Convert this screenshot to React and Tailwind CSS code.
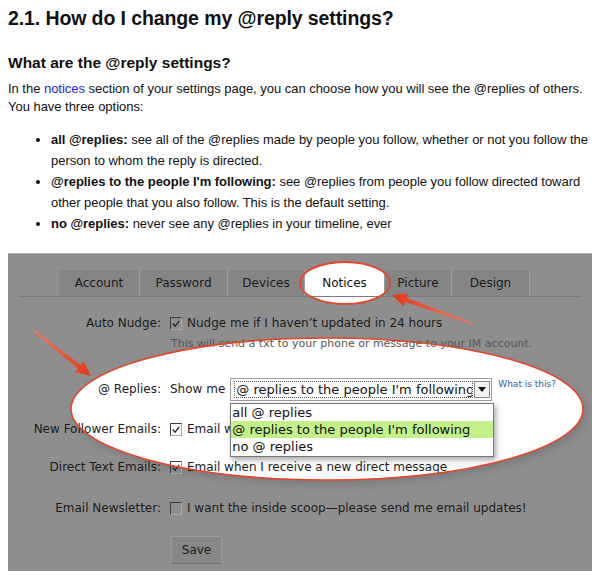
import React from "react";

const tabs = [
	{ name: "Account", w: 81 },
	{ name: "Password", w: 88 },
	{ name: "Devices", w: 77 },
	{ name: "Notices", w: 80, active: true },
	{ name: "Picture", w: 67 },
	{ name: "Design", w: 78 },
];

// tapered red arrow drawn from tail (x1,y1) to head (x2,y2)
function Arrow({ x1, y1, x2, y2, id }) {
	const dx = x2 - x1;
	const dy = y2 - y1;
	const len = Math.sqrt(dx * dx + dy * dy);
	const ux = dx / len;
	const uy = dy / len;
	const nx = -uy;
	const ny = ux;
	const headLen = 15;
	const headW = 7;
	const bx = x2 - ux * headLen;
	const by = y2 - uy * headLen;
	const pts = [
		[x1 + nx * 0.8, y1 + ny * 0.8],
		[bx + nx * 2.2, by + ny * 2.2],
		[bx + nx * headW, by + ny * headW],
		[x2, y2],
		[bx - nx * headW, by - ny * headW],
		[bx - nx * 2.2, by - ny * 2.2],
		[x1 - nx * 0.8, y1 - ny * 0.8],
	];
	return (
		<g>
			<defs>
				<linearGradient id={id} x1={x1} y1={y1} x2={x2} y2={y2} gradientUnits="userSpaceOnUse">
					<stop offset="0" stopColor="#f07a5e" />
					<stop offset="1" stopColor="#e2381c" />
				</linearGradient>
			</defs>
			<polygon points={pts.map((p) => p.join(",")).join(" ")} fill={`url(#${id})`} />
		</g>
	);
}

function Check({ checked }) {
	return (
		<span className="inline-flex w-[12px] h-[13px] shrink-0 items-end border-l border-t border-[#3a3a3a] border-r border-r-[#a8a8a8] border-b border-b-[#a8a8a8]">
			{checked && (
				<svg width="11" height="11" viewBox="0 0 11 11">
					<path d="M2 5.5 L4.5 8.5 L9 2.5" fill="none" stroke="#222" strokeWidth="1.3" />
				</svg>
			)}
		</span>
	);
}

function Row({ label, children, className }) {
	return (
		<div className={`flex items-center ${className || ""}`}>
			<div className="w-[154px] shrink-0 text-right pr-[1px]">{label}</div>
			<div className="ml-[8px] flex items-center">{children}</div>
		</div>
	);
}

export default function App() {
	return (
		<div className="w-[600px] h-[583px] bg-white text-[#111] overflow-hidden px-[8px] pt-[5px]" style={{ fontFamily: '"Liberation Sans", Arial, sans-serif' }}>
			<h1 className="text-[19.5px] font-bold leading-[26px] tracking-[-0.1px]">2.1. How do I change my @reply settings?</h1>
			<h2 className="mt-[22px] text-[15.5px] font-bold leading-[20px]">What are the @reply settings?</h2>
			<p className="mt-[7px] text-[13px] leading-[18px] tracking-[-0.03px]">
				In the <span className="text-[#2222ee]">notices</span> section of your settings page, you can choose how you will see the @replies of others.<br />
				You have three options:
			</p>
			<ul className="mt-[13px] list-disc pl-[43px] text-[13px] leading-[21px] tracking-[-0.03px]">
				<li>
					<b>all @replies:</b> see all of the @replies made by people you follow, whether or not you follow the person to whom the reply is directed.
				</li>
				<li>
					<b>@replies to the people I'm following:</b> see @replies from people you follow directed toward other people that you also follow. This is the default setting.
				</li>
				<li>
					<b>no @replies:</b> never see any @replies in your timeline, ever
				</li>
			</ul>

			<div className="relative mt-[19px] w-[584px] h-[318px] bg-[#8e8e8e] border-t border-[#b4b4b4] text-[#1c1c1c] text-[12px]" style={{ fontFamily: '"DejaVu Sans", "Lucida Grande", sans-serif' }}>
				{/* white spotlight shapes behind the form */}
				<svg className="absolute inset-0 pointer-events-none" width="584" height="318">
					<defs>
						<filter id="soft" x="-10%" y="-30%" width="120%" height="160%">
							<feGaussianBlur stdDeviation="4" />
						</filter>
					</defs>
					<ellipse cx="322" cy="159" rx="256" ry="71" fill="#555" opacity="0.35" filter="url(#soft)" />
					<ellipse cx="319" cy="155" rx="256" ry="71" fill="#fff" />
					<ellipse cx="337" cy="29" rx="45" ry="21" fill="#fff" />
				</svg>

				<div className="relative">
					<div className="pt-[16px] px-[10px]">
						<div className="flex pl-[41px] border-b border-[#7a7a7a] h-[27px]">
							{tabs.map((t) => (
								<div
									key={t.name}
									className={`h-[26px] flex items-center justify-center border-r border-[#9c9c9c] ${t.active ? "bg-transparent text-[#111]" : "bg-[#858585]"}`}
									style={{ width: t.w }}
								>
									{t.name}
								</div>
							))}
						</div>
					</div>

					<Row label="Auto Nudge:" className="mt-[17px] h-[18px]">
						<Check checked />
						<span className="ml-[5px]">Nudge me if I haven’t updated in 24 hours</span>
					</Row>
					<div className="ml-[163px] mt-[3px] h-[18px] leading-[18px] text-[#575757] text-[11px]">This will send a txt to your phone or message to your IM account.</div>

					<Row label="@ Replies:" className="mt-[25px] h-[22px]">
						<span className="mr-[5px]">Show me</span>
						<div className="relative">
							<div className="w-[262px] h-[23px] bg-white border border-[#9a9a9a] flex items-center pl-[3px] pr-[1px]">
								<div className="flex-1 h-[17px] border border-dotted border-[#555] overflow-hidden whitespace-nowrap text-[13px] leading-[15px] text-[#111] pl-[1px]">@ replies to the people I'm following</div>
								<div className="w-[16px] h-[17px] ml-[1px] border border-[#888] bg-[#f2f2f2] flex items-center justify-center">
									<svg width="8" height="5" viewBox="0 0 8 5"><path d="M0 0 L8 0 L4 5 Z" fill="#111" /></svg>
								</div>
							</div>
							<div className="absolute left-0 top-[25px] w-[264px] bg-white border border-[#777] text-[13px] leading-[17px] text-[#111] shadow-[2px_3px_6px_rgba(0,0,0,0.35)] z-10">
								<div className="pl-[1px] h-[17px]">all @ replies</div>
								<div className="pl-[1px] h-[17px] bg-[#c4f08a]">@ replies to the people I'm following</div>
								<div className="pl-[1px] h-[18px]">no @ replies</div>
							</div>
						</div>
						<a className="relative top-[-4px] ml-[6px] text-[9px] text-[#2f5f9f]">What is this?</a>
					</Row>

					<Row label="New Follower Emails:" className="mt-[20px] h-[18px]">
						<Check checked />
						<span className="ml-[5px]">Email when someone starts following me</span>
					</Row>

					<Row label="Direct Text Emails:" className="mt-[20px] h-[18px]">
						<Check checked />
						<span className="ml-[5px]">Email when I receive a new direct message</span>
					</Row>

					<Row label="Email Newsletter:" className="mt-[23px] h-[18px]">
						<Check />
						<span className="ml-[5px]">I want the inside scoop—please send me email updates!</span>
					</Row>

					<div className="ml-[163px] mt-[19px] w-[51px] h-[28px] bg-[#878787] border border-[#9b9b9b] border-b-[#6f6f6f] flex items-center justify-center">Save</div>
				</div>

				{/* red outlines and arrows on top */}
				<svg className="absolute inset-0 pointer-events-none z-20" width="584" height="318">
					<ellipse cx="319" cy="155" rx="256" ry="71" fill="none" stroke="#e5452a" strokeWidth="1.6" />
					<ellipse cx="337" cy="29" rx="45" ry="21" fill="none" stroke="#e5452a" strokeWidth="1.8" />
					<Arrow id="a1" x1={463} y1={69} x2={384} y2={41} />
					<Arrow id="a2" x1={25} y1={76} x2={83} y2={122} />
				</svg>
			</div>
		</div>
	);
}
